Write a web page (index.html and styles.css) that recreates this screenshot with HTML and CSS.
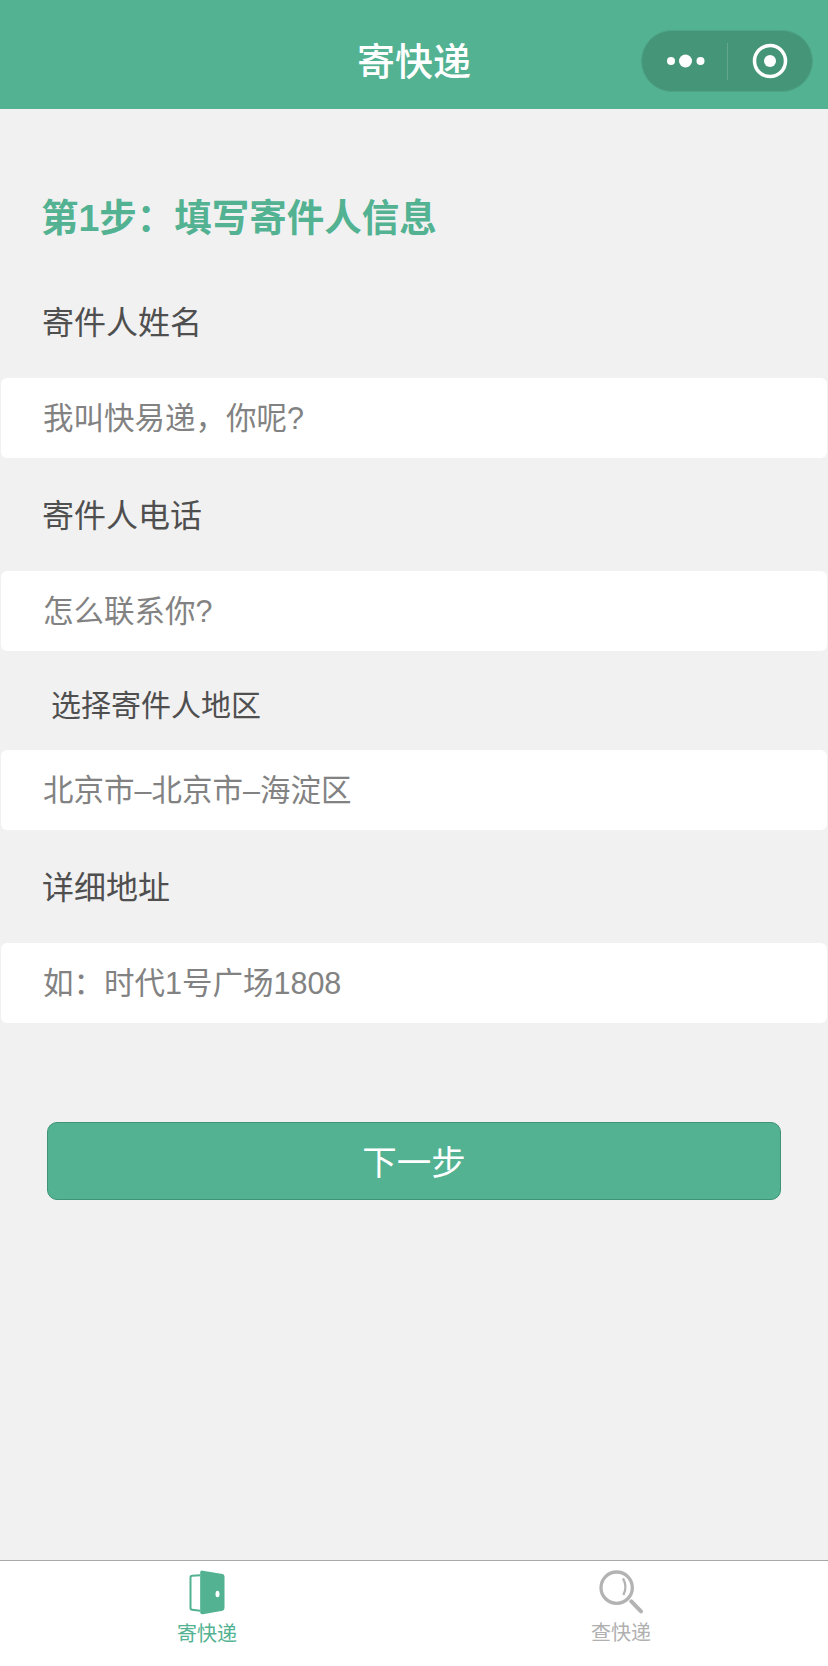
FILE: index.html
```html
<!DOCTYPE html>
<html lang="zh-CN">
<head>
  <meta charset="UTF-8">
  <title>寄快递</title>
  <link rel="stylesheet" href="styles.css">
</head>
<body>

  <header class="navbar">
    <div class="navbar-title">寄快递</div>
    <div class="capsule">
      <svg class="capsule-more" viewBox="0 0 38 14" width="38" height="14">
        <circle cx="4" cy="7" r="4" fill="#fff"/>
        <circle cx="18.5" cy="7" r="6.5" fill="#fff"/>
        <circle cx="33.5" cy="7" r="4" fill="#fff"/>
      </svg>
      <span class="capsule-line"></span>
      <svg class="capsule-close" viewBox="0 0 36 36" width="36" height="36">
        <circle cx="18" cy="18" r="15.5" fill="none" stroke="#fff" stroke-width="3.5"/>
        <circle cx="18" cy="18" r="6" fill="#fff"/>
      </svg>
    </div>
  </header>

  <main class="content">
    <h1 class="step-title">第1步：填写寄件人信息</h1>

    <div class="label label-first">寄件人姓名</div>
    <div class="field">我叫快易递，你呢?</div>

    <div class="label">寄件人电话</div>
    <div class="field">怎么联系你?</div>

    <div class="label label-area">选择寄件人地区</div>
    <div class="field">北京市–北京市–海淀区</div>

    <div class="label">详细地址</div>
    <div class="field">如：时代1号广场1808</div>

    <button class="next-btn">下一步</button>
  </main>

  <nav class="tabbar">
    <div class="tab tab-active">
      <svg class="tab-icon" viewBox="57 44 107 135" width="36" height="45">
        <path d="M90 60 L66 61 Q61 61 61 66 V158 Q61 163 66 163 L90 166" fill="none" stroke="#52b292" stroke-width="6"/>
        <path d="M90 52 Q90 44 98 46 L157 56 Q163 57 163 64 V158 Q163 165 157 166 L98 177 Q90 178 90 170 Z" fill="#52b292"/>
        <ellipse cx="142" cy="116" rx="6" ry="10" fill="#fff"/>
      </svg>
      <span>寄快递</span>
    </div>
    <div class="tab">
      <svg class="tab-icon" viewBox="57 47 132 132" width="44" height="44">
        <circle cx="110" cy="100" r="47" fill="none" stroke="#b3b3b3" stroke-width="10"/>
        <path d="M129 72 Q143 96 130 122" fill="none" stroke="#b3b3b3" stroke-width="7"/>
        <path d="M154 141 L183 171" fill="none" stroke="#b3b3b3" stroke-width="12" stroke-linecap="round"/>
      </svg>
      <span>查快递</span>
    </div>
  </nav>

</body>
</html>
```

FILE: styles.css
```css
* {
  box-sizing: border-box;
}

html, body {
  margin: 0;
  height: 100%;
}

body {
  display: flex;
  flex-direction: column;
  background: #f1f1f1;
  font-family: "Liberation Sans", "Noto Sans CJK SC", sans-serif;
  color: #4f4f4f;
}

.navbar {
  position: relative;
  height: 109px;
  flex: none;
  background: #52b292;
  display: flex;
  align-items: center;
  justify-content: center;
  padding-top: 7px;
}

.navbar-title {
  color: #fff;
  font-size: 38px;
  font-weight: 500;
}

.capsule {
  position: absolute;
  top: 30px;
  right: 15px;
  width: 172px;
  height: 62px;
  border-radius: 31px;
  background: #459679;
  border: 1px solid #4fa386;
  display: flex;
  align-items: center;
}

.capsule-more {
  margin-left: 25px;
}

.capsule-line {
  width: 1px;
  height: 37px;
  margin-left: 22px;
  background: #63a78f;
}

.capsule-close {
  margin-left: 24px;
}

.content {
  flex: 1;
}

.step-title {
  margin: 0;
  padding: 82px 0 0 41px;
  height: 190px;
  font-size: 37.5px;
  line-height: 54px;
  font-weight: 700;
  color: #52b292;
}

.label {
  height: 113px;
  padding: 35px 0 0 42px;
  font-size: 32px;
  line-height: 46px;
}

.label-first {
  height: 79px;
  padding-top: 3px;
  line-height: 42px;
}

.label-area {
  height: 99px;
  padding-top: 32px;
  padding-left: 51px;
  font-size: 30px;
}

.field {
  height: 80px;
  margin: 0 1px;
  padding-left: 42px;
  background: #fff;
  border-radius: 6px;
  font-size: 30.5px;
  line-height: 81px;
  color: #828282;
}

.next-btn {
  display: block;
  width: 734px;
  height: 78px;
  margin: 99px 0 0 47px;
  padding-bottom: 4px;
  background: #52b292;
  border: 1px solid #3f9377;
  border-radius: 10px;
  color: #fff;
  font-family: inherit;
  font-size: 34.5px;
}

.tabbar {
  flex: none;
  height: 106px;
  display: flex;
  background: #fff;
  border-top: 1px solid #a9a9a9;
}

.tab {
  flex: 1;
  display: flex;
  flex-direction: column;
  align-items: center;
  padding-top: 9px;
  font-size: 20px;
  line-height: 30px;
  color: #b0b0b0;
}

.tab-active {
  color: #52b292;
}

.tab-icon {
  display: block;
  margin-bottom: 4px;
}
```
